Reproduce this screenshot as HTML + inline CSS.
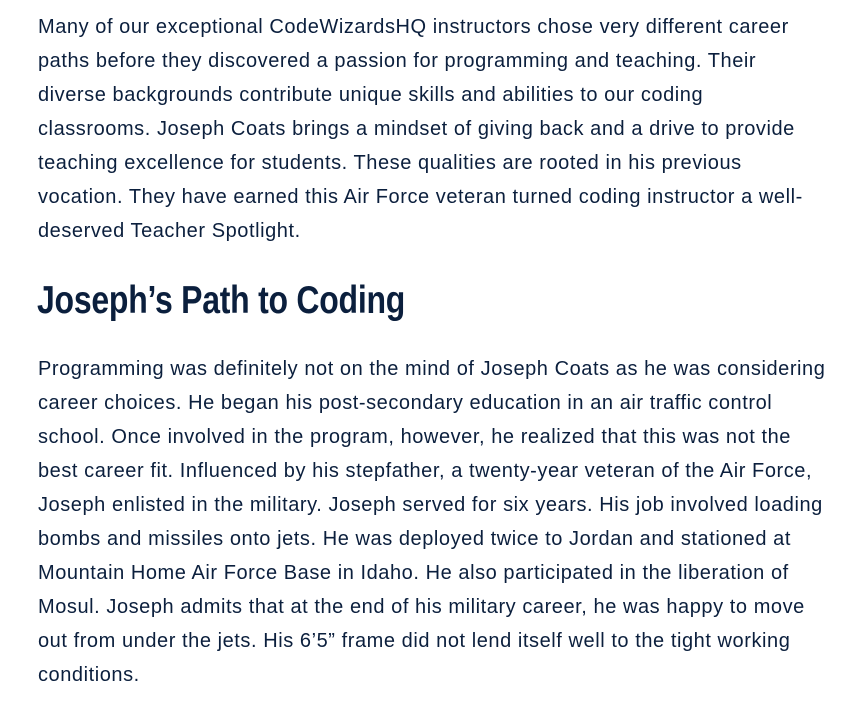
<!DOCTYPE html>
<html><head><meta charset="utf-8"><style>
html,body{margin:0;padding:0;background:#fff;width:844px;height:727px;overflow:hidden}
body{color:#0b1f3d;font-family:"Liberation Sans",sans-serif}
.p{position:absolute;left:38px;font-size:20px;line-height:34px;white-space:nowrap;letter-spacing:0.56px}
h2{position:absolute;left:37px;top:279px;margin:0;font-family:"Liberation Sans Narrow","Liberation Sans",sans-serif;font-weight:bold;font-size:39px;line-height:44px;white-space:nowrap;color:#0b1f3d;transform:scaleX(0.82);transform-origin:0 0;letter-spacing:-0.3px}
</style></head><body>
<div class="p" style="top:10px">Many of our exceptional CodeWizardsHQ instructors chose very different career<br>paths before they discovered a passion for programming and teaching. Their<br>diverse backgrounds contribute unique skills and abilities to our coding<br>classrooms. Joseph Coats brings a mindset of giving back and a drive to provide<br>teaching excellence for students. These qualities are rooted in his previous<br>vocation. They have earned this Air Force veteran turned coding instructor a well-<br>deserved Teacher Spotlight.</div>
<h2>Joseph’s Path to Coding</h2>
<div class="p" style="top:352px">Programming was definitely not on the mind of Joseph Coats as he was considering<br>career choices. He began his post-secondary education in an air traffic control<br>school. Once involved in the program, however, he realized that this was not the<br>best career fit. Influenced by his stepfather, a twenty-year veteran of the Air Force,<br>Joseph enlisted in the military. Joseph served for six years. His job involved loading<br>bombs and missiles onto jets. He was deployed twice to Jordan and stationed at<br>Mountain Home Air Force Base in Idaho. He also participated in the liberation of<br>Mosul. Joseph admits that at the end of his military career, he was happy to move<br>out from under the jets. His 6’5” frame did not lend itself well to the tight working<br>conditions.</div>
</body></html>
